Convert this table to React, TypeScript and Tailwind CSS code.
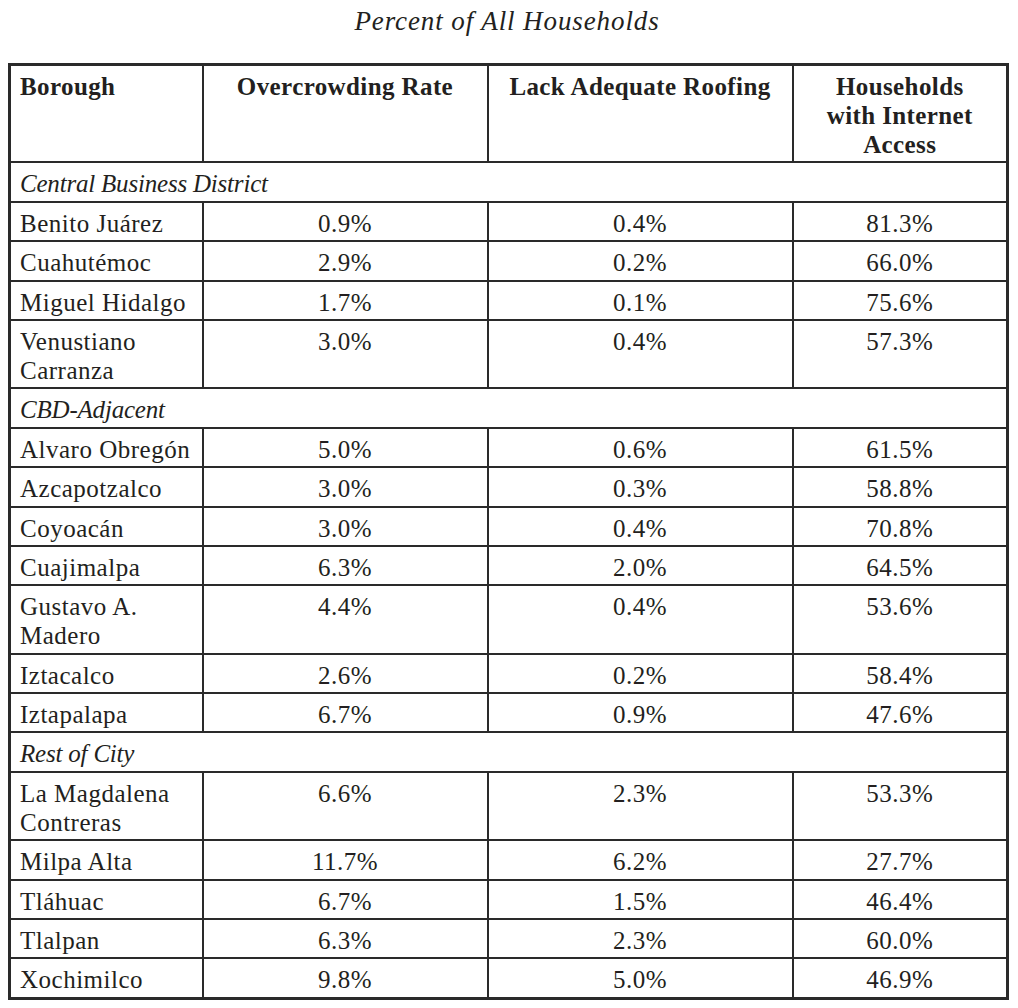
import React from "react";

type Row = { name: React.ReactNode; a: string; b: string; c: string };
type Section = { title: string; rows: Row[] };

const sections: Section[] = [
  {
    title: "Central Business District",
    rows: [
      { name: "Benito Juárez", a: "0.9%", b: "0.4%", c: "81.3%" },
      { name: "Cuahutémoc", a: "2.9%", b: "0.2%", c: "66.0%" },
      { name: "Miguel Hidalgo", a: "1.7%", b: "0.1%", c: "75.6%" },
      { name: <>Venustiano<br />Carranza</>, a: "3.0%", b: "0.4%", c: "57.3%" },
    ],
  },
  {
    title: "CBD-Adjacent",
    rows: [
      { name: "Alvaro Obregón", a: "5.0%", b: "0.6%", c: "61.5%" },
      { name: "Azcapotzalco", a: "3.0%", b: "0.3%", c: "58.8%" },
      { name: "Coyoacán", a: "3.0%", b: "0.4%", c: "70.8%" },
      { name: "Cuajimalpa", a: "6.3%", b: "2.0%", c: "64.5%" },
      { name: <>Gustavo A.<br />Madero</>, a: "4.4%", b: "0.4%", c: "53.6%" },
      { name: "Iztacalco", a: "2.6%", b: "0.2%", c: "58.4%" },
      { name: "Iztapalapa", a: "6.7%", b: "0.9%", c: "47.6%" },
    ],
  },
  {
    title: "Rest of City",
    rows: [
      { name: <>La Magdalena<br />Contreras</>, a: "6.6%", b: "2.3%", c: "53.3%" },
      { name: "Milpa Alta", a: "11.7%", b: "6.2%", c: "27.7%" },
      { name: "Tláhuac", a: "6.7%", b: "1.5%", c: "46.4%" },
      { name: "Tlalpan", a: "6.3%", b: "2.3%", c: "60.0%" },
      { name: "Xochimilco", a: "9.8%", b: "5.0%", c: "46.9%" },
    ],
  },
];

const cell =
  "border-2 border-[#2a2a2a] align-top pt-[6px] pb-[2.4px] leading-[29px]";

export default function App() {
  return (
    <div className="bg-white text-[#231f20] w-[1018px] min-h-[1008px] font-['Liberation_Serif','Times_New_Roman',serif]">
      <div className="pl-2 w-[1008px]">
        <div className="text-center italic text-[27px] leading-[36px] pt-[3px] mb-[24px] tracking-[0.9px] w-[998px]">
          Percent of All Households
        </div>
        <table className="table-fixed border-collapse w-[998px] border-[3px] border-[#2a2a2a] text-[25px]">
          <colgroup>
            <col className="w-[193px]" />
            <col className="w-[285px]" />
            <col className="w-[305px]" />
            <col className="w-[215px]" />
          </colgroup>
          <thead>
            <tr className="font-bold tracking-[0.4px]">
              <th className={`${cell} text-left pl-[9px] font-bold`}>Borough</th>
              <th className={`${cell} text-center font-bold`}>Overcrowding Rate</th>
              <th className={`${cell} text-center font-bold`}>Lack Adequate Roofing</th>
              <th className={`${cell} text-center font-bold`}>
                Households
                <br />
                with Internet
                <br />
                Access
              </th>
            </tr>
          </thead>
          <tbody>
            {sections.map((s) => (
              <React.Fragment key={s.title}>
                <tr>
                  <td colSpan={4} className={`${cell} pl-[9px] italic tracking-[-0.2px]`}>
                    {s.title}
                  </td>
                </tr>
                {s.rows.map((r, i) => (
                  <tr key={i} className="tracking-[0.5px]">
                    <td className={`${cell} pl-[9px] whitespace-nowrap`}>{r.name}</td>
                    <td className={`${cell} text-center`}>{r.a}</td>
                    <td className={`${cell} text-center`}>{r.b}</td>
                    <td className={`${cell} text-center`}>{r.c}</td>
                  </tr>
                ))}
              </React.Fragment>
            ))}
          </tbody>
        </table>
      </div>
    </div>
  );
}
